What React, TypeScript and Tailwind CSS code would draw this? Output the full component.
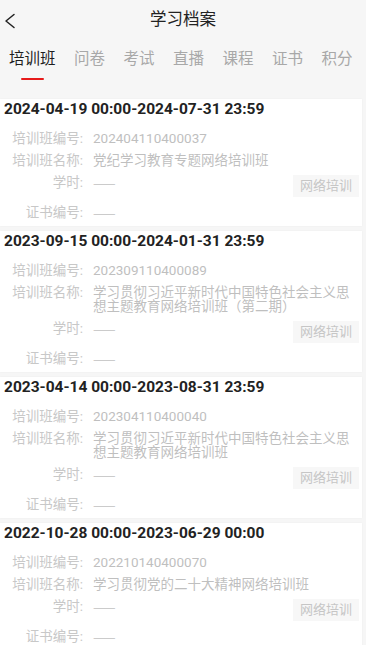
const TABS = ['培训班', '问卷', '考试', '直播', '课程', '证书', '积分'];

const RECORDS = [
  {
    period: '2024-04-19 00:00-2024-07-31 23:59',
    code: '202404110400037',
    name: '党纪学习教育专题网络培训班',
  },
  {
    period: '2023-09-15 00:00-2024-01-31 23:59',
    code: '202309110400089',
    name: '学习贯彻习近平新时代中国特色社会主义思想主题教育网络培训班（第二期）',
  },
  {
    period: '2023-04-14 00:00-2023-08-31 23:59',
    code: '202304110400040',
    name: '学习贯彻习近平新时代中国特色社会主义思想主题教育网络培训班',
  },
  {
    period: '2022-10-28 00:00-2023-06-29 00:00',
    code: '202210140400070',
    name: '学习贯彻党的二十大精神网络培训班',
  },
];

const CJK = { fontFamily: '"Noto Sans CJK SC", sans-serif' };

function Row({ label, children }: { label: string; children: React.ReactNode }) {
  return (
    <div className="flex items-start leading-[22px]">
      <span className="w-[83px] shrink-0 text-right text-[#c8c8c8]">{label}:</span>
      <span className="ml-[10px] min-w-0 flex-1 text-[#bfbfbf]">{children}</span>
    </div>
  );
}

export default function App() {
  return (
    <div
      className="h-[645px] bg-[#f6f6f6] overflow-hidden"
      style={{ fontFamily: 'Roboto, "Noto Sans CJK SC", sans-serif' }}
    >
      {/* Nav bar */}
      <div className="relative h-[40px] flex items-center justify-center">
        <svg className="absolute left-[4px] top-[13px]" width="12" height="16" viewBox="0 0 12 16" fill="none">
          <path d="M10 1.5 L2 8 L10 14.5" stroke="#222" strokeWidth="1.5" strokeLinecap="round" strokeLinejoin="round" />
        </svg>
        <h1 className="text-[16.5px] text-[#222]">学习档案</h1>
      </div>

      {/* Tabs */}
      <div className="flex pl-[9px] gap-[18.5px] h-[38px] items-center">
        {TABS.map((tab, i) => (
          <div key={tab} className="relative shrink-0">
            <span className={i === 0 ? 'text-[15.5px] text-[#1e1e1e]' : 'text-[15.5px] text-[#a8a8a8]'}>
              {tab}
            </span>
            {i === 0 && <div className="absolute left-[12px] top-[31px] w-[23px] h-[2px] rounded-full bg-[#e61a1a]" />}
          </div>
        ))}
      </div>

      {/* Records */}
      <div className="mt-[21px] flex flex-col gap-[5px] mr-[4px]">
        {RECORDS.map((r) => (
          <div key={r.code} className="bg-white shadow-[0_0_2px_rgba(0,0,0,0.04)] pb-[2px]">
            <div className="pl-[4px] h-[22px] flex items-center text-[15.5px] font-bold text-[#222]">
              {r.period}
            </div>
            <div className="pt-[6px] text-[13.5px]">
              <Row label="培训班编号">{r.code}</Row>
              <Row label="培训班名称">
                <span className="block pr-[2px] leading-[14px] pt-[4px] pb-[4px]">{r.name}</span>
              </Row>
              <div className="flex items-start justify-between h-[30px]">
                <Row label="学时">
                  <span style={CJK}>——</span>
                </Row>
                <span className="mt-[4px] mr-[3px] px-[7px] h-[22px] flex items-center bg-[#f7f7f7] text-[13px] text-[#c6c6c6]">
                  网络培训
                </span>
              </div>
              <Row label="证书编号">
                <span style={CJK}>——</span>
              </Row>
            </div>
          </div>
        ))}
      </div>
    </div>
  );
}
